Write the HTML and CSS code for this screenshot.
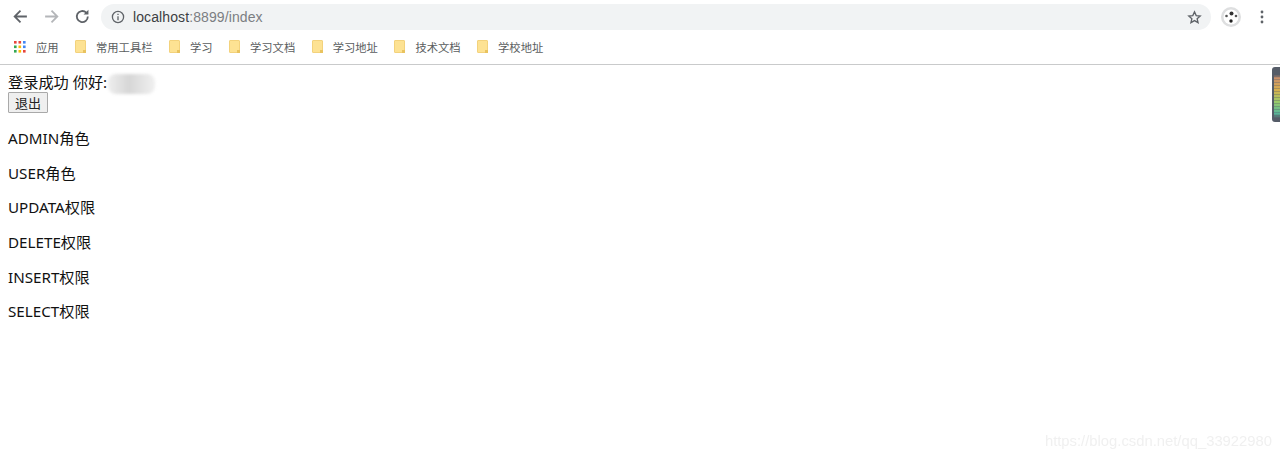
FILE: index.html
```html
<!DOCTYPE html>
<html lang="zh">
<head>
<meta charset="utf-8">
<title>index</title>
<link rel="stylesheet" href="styles.css">
</head>
<body>
<div class="chrome">
  <div class="toolbar">
    <svg class="nav" viewBox="0 0 16 16"><path d="M14 8H3M8 2.5 2.5 8 8 13.5" fill="none" stroke="#5f6368" stroke-width="1.7"/></svg>
    <svg class="nav" viewBox="0 0 16 16"><path d="M2 8h11M8 2.5 13.5 8 8 13.5" fill="none" stroke="#b4b6b9" stroke-width="1.7"/></svg>
    <svg class="nav" viewBox="0 0 16 16"><path d="M13 8a5.2 5.2 0 1 1-1.5-3.6" fill="none" stroke="#5f6368" stroke-width="1.7"/><path d="M13.6 1.6v4.6H9z" fill="#5f6368"/></svg>
    <div class="omnibox">
      <svg class="info" viewBox="0 0 14 14"><circle cx="7" cy="7" r="5.6" fill="none" stroke="#5f6368" stroke-width="1.3"/><path d="M7 6.2v4M7 3.8v1.3" stroke="#5f6368" stroke-width="1.3"/></svg>
      <span class="url"><span class="host">localhost</span>:8899/index</span>
      <svg class="star" viewBox="0 0 16 16"><path d="m8 2 1.8 4 4.3.4-3.3 2.9 1 4.2L8 11.3l-3.8 2.2 1-4.2-3.3-2.9L6.200 6z" fill="none" stroke="#5f6368" stroke-width="1.4"/></svg>
    </div>
    <div class="avatar">
      <svg viewBox="0 0 20 20"><circle cx="10" cy="10" r="10" fill="#dedfe0"/><circle cx="10" cy="10" r="7.500" fill="#fff"/><circle cx="10.500" cy="6.500" r="2" fill="#333"/><circle cx="5.500" cy="9" r="1.300" fill="#555"/><circle cx="10" cy="14" r="1.700" fill="#222"/><circle cx="15" cy="9" r="1.300" fill="#555"/></svg>
    </div>
    <svg class="menu" viewBox="0 0 4 16"><circle cx="2" cy="3" r="1.400" fill="#5f6368"/><circle cx="2" cy="8" r="1.400" fill="#5f6368"/><circle cx="2" cy="13" r="1.400" fill="#5f6368"/></svg>
  </div>
  <div class="bookmarks">
    <div class="mark apps">
      <svg class="grid" viewBox="0 0 12 12">
        <rect x="0" y="0" width="2.600" height="2.600" fill="#e8453c"/><rect x="4.500" y="0" width="2.600" height="2.600" fill="#e8453c"/><rect x="9" y="0" width="2.600" height="2.600" fill="#4285f4"/>
        <rect x="0" y="4.500" width="2.600" height="2.600" fill="#34a853"/><rect x="4.500" y="4.500" width="2.600" height="2.600" fill="#fbbc05"/><rect x="9" y="4.500" width="2.600" height="2.600" fill="#4285f4"/>
        <rect x="0" y="9" width="2.600" height="2.600" fill="#34a853"/><rect x="4.500" y="9" width="2.600" height="2.600" fill="#fbbc05"/><rect x="9" y="9" width="2.600" height="2.600" fill="#e8453c"/>
      </svg>
      <span>应用</span>
    </div>
    <div class="mark w78"><span class="folder"></span><span>常用工具栏</span></div>
    <div class="mark w60"><span class="folder"></span><span>学习</span></div>
    <div class="mark w83"><span class="folder"></span><span>学习文档</span></div>
    <div class="mark w83"><span class="folder"></span><span>学习地址</span></div>
    <div class="mark w83"><span class="folder"></span><span>技术文档</span></div>
    <div class="mark"><span class="folder"></span><span>学校地址</span></div>
  </div>
</div>
<div class="page">
  <div class="greeting">登录成功 你好:<span class="blur"></span></div>
  <button class="logout" type="button">退出</button>
  <p>ADMIN角色</p>
  <p>USER角色</p>
  <p>UPDATA权限</p>
  <p>DELETE权限</p>
  <p>INSERT权限</p>
  <p>SELECT权限</p>
</div>
<div class="extension"><div class="bars"></div></div>
<div class="watermark">https://blog.csdn.net/qq_33922980</div>
</body>
</html>
```
FILE: styles.css
```css
* { box-sizing: border-box; }
html, body { margin: 0; padding: 0; height: 458px; overflow: hidden; background: #fff; }
body { position: relative; font-family: "Noto Sans", "Noto Sans CJK SC", sans-serif; color: #111; }

.chrome { height: 65px; border-bottom: 1px solid #c9cacb; background: #fff; }
.toolbar { height: 33px; display: flex; align-items: center; padding: 0 16px 0 12px; }
.nav { width: 17px; height: 17px; margin-right: 14px; flex: none; }
.nav:nth-child(3) { margin-right: 10px; }
.omnibox { flex: 1; height: 26px; margin-top: 1px; border-radius: 13px; background: #f1f3f4; display: flex; align-items: center; padding: 0 9px 0 10px; }
.info { width: 14px; height: 14px; margin-right: 8px; }
.url { flex: 1; font-family: "Liberation Sans", sans-serif; font-size: 14px; color: #7b7e82; letter-spacing: 0.1px; }
.host { color: #3c4043; }
.star { width: 15px; height: 15px; }
.avatar { width: 20px; height: 20px; margin-left: 10px; margin-right: 19px; }
.avatar svg { display: block; width: 20px; height: 20px; }
.menu { width: 4px; height: 16px; }

.bookmarks { height: 31px; display: flex; align-items: center; padding: 0 0 4px 14px; font-size: 11.300px; color: #5a5d60; }
.mark { display: flex; align-items: center; flex: none; }
.apps { width: 61px; }
.grid { width: 12px; height: 12px; margin-right: 10px; }
.folder { position: relative; width: 11px; height: 13px; margin-right: 10px; background: #fde293; border: 1px solid #f3d27c; border-radius: 1px; flex: none; }
.folder::after { content: ""; position: absolute; right: -1px; bottom: -1px; width: 3px; height: 3px; background: #e9c35f; }
.w78 { width: 94px; }
.w60 { width: 60px; }
.w83 { width: 82.700px; }

.page { padding: 8px 8px 0; font-size: 15.200px; line-height: 18px; color: #111; }
.greeting { height: 19px; position: relative; }
.blur { position: absolute; left: 100px; top: 1px; width: 47px; height: 20px; border-radius: 8px; background: linear-gradient(90deg, #eeeeee, #d6d6d6 45%, #f0f0f0); filter: blur(1.500px); }
.logout { display: block; width: 40px; height: 21px; padding: 0; font: 13px "Noto Sans", "Noto Sans CJK SC", sans-serif; color: #222; background: #efefef; border: 1px solid #a9a9a9; border-radius: 1px; }
.page p { margin: 16.600px 0 0; }
.logout + p { margin-top: 16.300px; }

.extension { position: absolute; left: 1272px; top: 67px; width: 8px; height: 55px; background: #555c68; border-radius: 3px 0 0 3px; padding: 4px 0 4px 2px; }
.bars { height: 100%; background: repeating-linear-gradient(180deg, transparent 0 2px, rgba(85, 92, 104, 0.35) 2px 3px), linear-gradient(180deg, #555c68 0 8%, #c98f6a 15%, #d8b04e 40%, #9ccb6a 65%, #58b89a 90%, #555c68); }
.watermark { position: absolute; right: 8px; top: 433px; font-family: "Liberation Sans", sans-serif; font-size: 14.800px; color: #f0f0f0; white-space: nowrap; filter: blur(0.500px); }
```
